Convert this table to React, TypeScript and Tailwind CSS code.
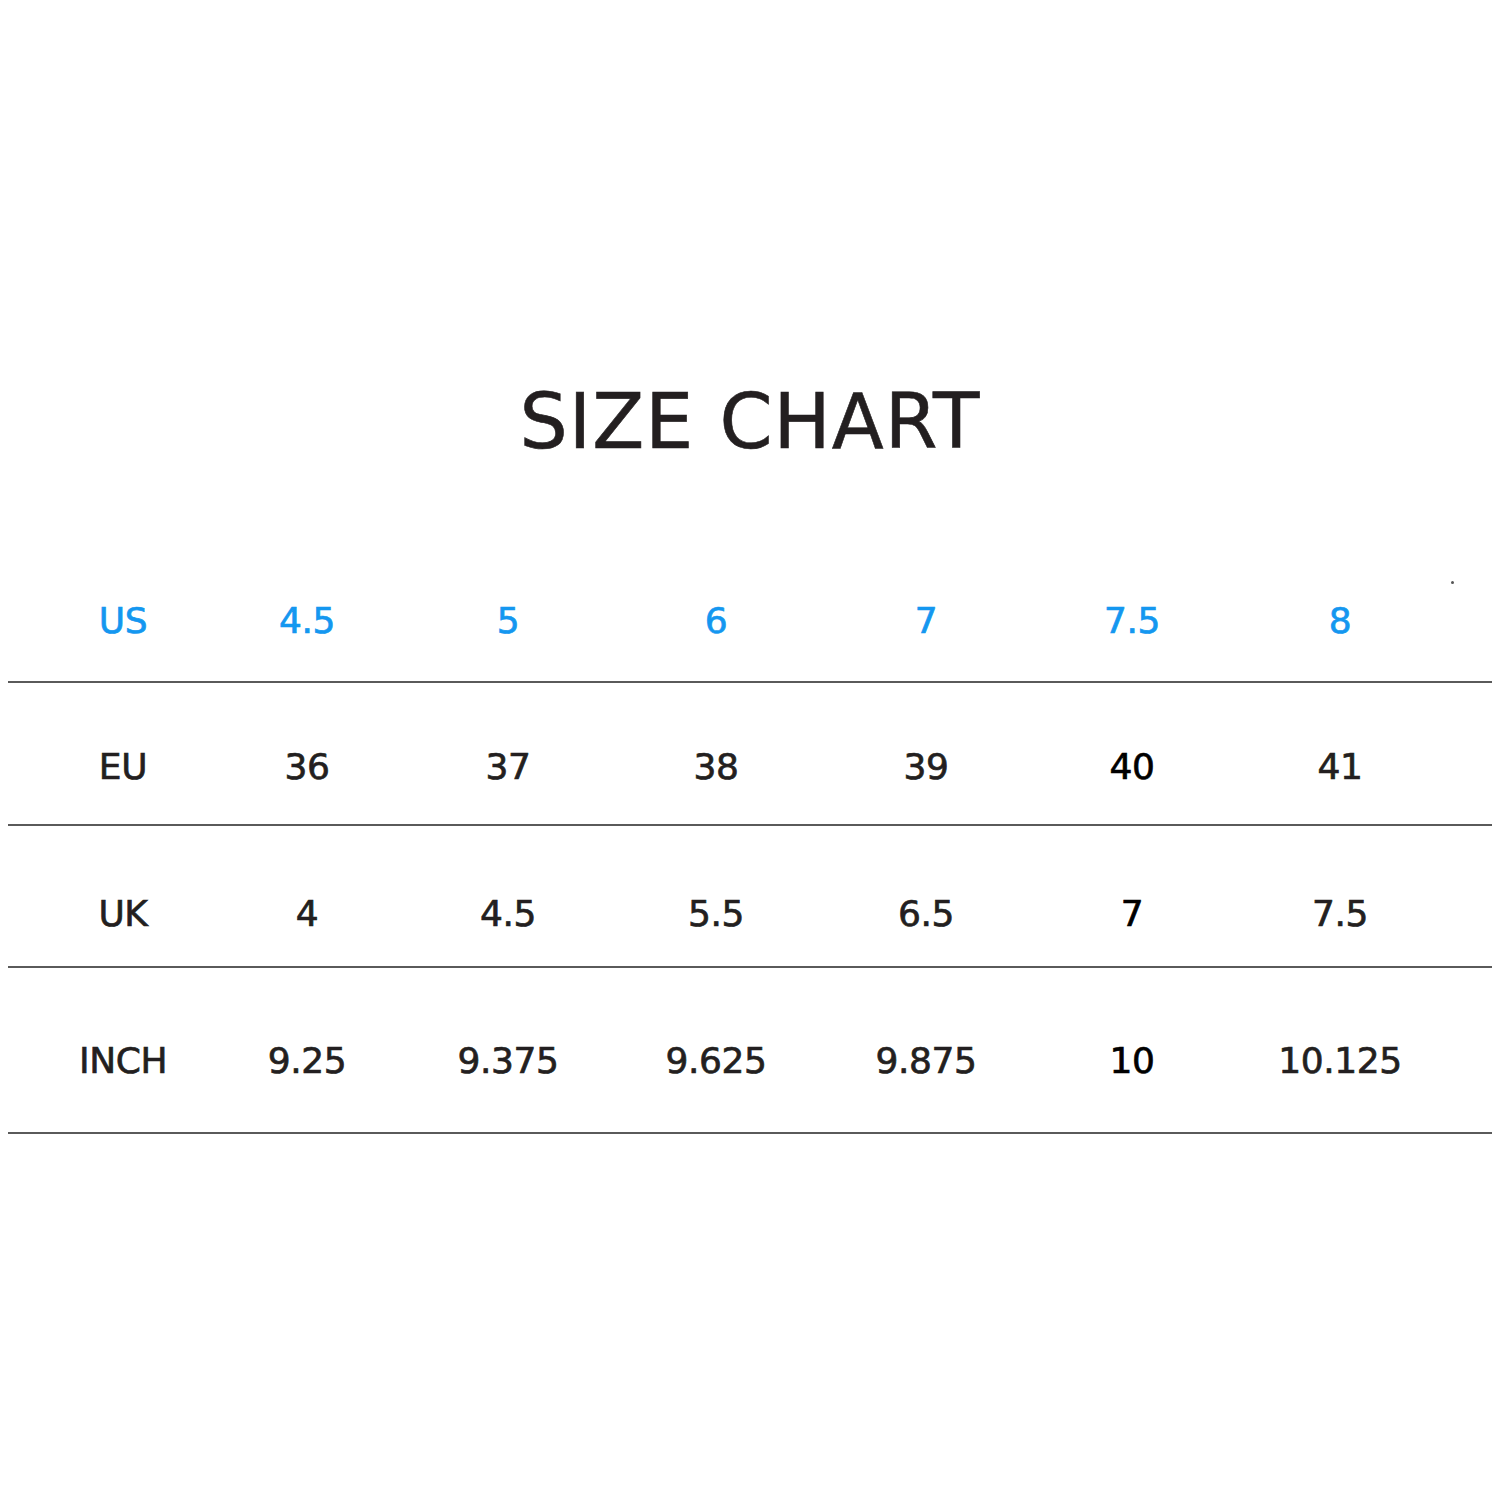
import React from "react";

const cols = "grid grid-cols-[230px_138px_264px_152px_268px_144px_272px] text-center";

const rows: { label: string; values: string[]; cls: string }[] = [
  { label: "EU", values: ["36", "37", "38", "39", "40", "41"], cls: "pt-[65px] pb-[39px]" },
  { label: "UK", values: ["4", "4.5", "5.5", "6.5", "7", "7.5"], cls: "pt-[69px] pb-[34px]" },
  { label: "INCH", values: ["9.25", "9.375", "9.625", "9.875", "10", "10.125"], cls: "pt-[74px] pb-[53px]" },
];

export default function App() {
  return (
    <div
      className="w-[1500px] h-[1500px] bg-white text-[#231f20]"
      style={{ fontFamily: '"DejaVu Sans", "Liberation Sans", sans-serif' }}
    >
      <div className="pt-[384px] text-center text-[76px] leading-none tracking-[1px] [-webkit-text-stroke:0.6px_#231f20]">
        SIZE CHART
      </div>
      <div className="h-[142px] pt-[121px] pl-[1451px]">
        <div className="w-[3px] h-[3px] rounded-full bg-[#555]" />
      </div>
      <div className="mx-[8px] w-[1484px] tracking-[-0.4px]">
        <div
          className={`${cols} pb-[42px] border-b-2 border-[#5a5a5a] text-[36px] leading-[37px] text-[#1497f0] [-webkit-text-stroke:0.7px_#1497f0]`}
        >
          <div>US</div>
          <div>4.5</div>
          <div>5</div>
          <div>6</div>
          <div>7</div>
          <div>7.5</div>
          <div>8</div>
        </div>
        {rows.map((r) => (
          <div
            key={r.label}
            className={`${cols} ${r.cls} border-b-2 border-[#5a5a5a] text-[36px] leading-[37px] [-webkit-text-stroke:0.7px_currentColor]`}
          >
            <div>{r.label}</div>
            {r.values.map((v, i) => (
              <div key={i} className={i === 4 ? "text-black" : ""}>
                {v}
              </div>
            ))}
          </div>
        ))}
      </div>
    </div>
  );
}
